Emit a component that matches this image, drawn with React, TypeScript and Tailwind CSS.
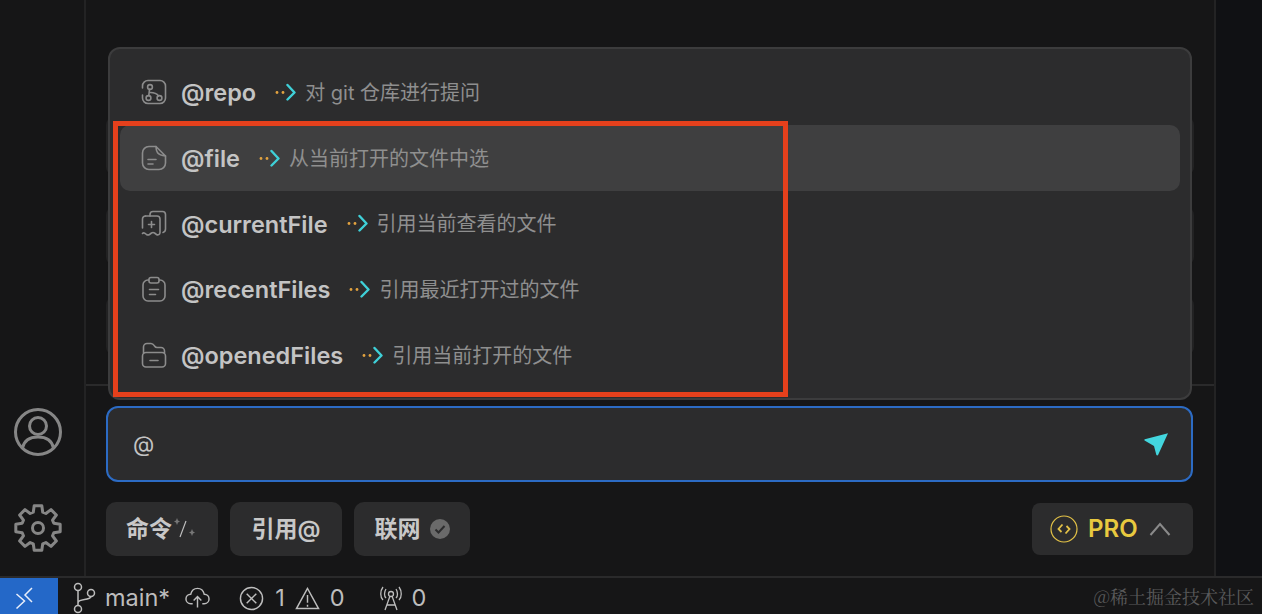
import React from 'react';

const ROWS = [
  { name: '@repo', hint: '对 git 仓库进行提问', icon: 'repo' },
  { name: '@file', hint: '从当前打开的文件中选', icon: 'file', active: true },
  { name: '@currentFile', hint: '引用当前查看的文件', icon: 'current' },
  { name: '@recentFiles', hint: '引用最近打开过的文件', icon: 'recent' },
  { name: '@openedFiles', hint: '引用当前打开的文件', icon: 'opened' },
];

const RowIcon = ({ kind }: { kind: string }) => {
  const common = { width: 26, height: 26, viewBox: '0 0 26 26', fill: 'none', stroke: '#8c8c8c', strokeWidth: 1.6, strokeLinecap: 'round' as const, strokeLinejoin: 'round' as const, className: 'shrink-0' };
  if (kind === 'repo') {
    return (
      <svg {...common}>
        <path d="M1.500 9V7A5.500 5.500 0 0 1 7 1.500h12A5.500 5.500 0 0 1 24.500 7v12a5.500 5.500 0 0 1-5.500 5.500H7A5.500 5.500 0 0 1 1.500 19v-3" />
        <circle cx="9" cy="8" r="2.400" />
        <circle cx="7.500" cy="19" r="2.400" />
        <circle cx="18.500" cy="19" r="2.400" />
        <path d="M8.500 10.400l-.7 6.200M9.500 13.500c3 0 6 .5 8 3.300" />
      </svg>
    );
  }
  if (kind === 'file') {
    return (
      <svg {...common}>
        <path d="M15 1.500H8A6.500 6.500 0 0 0 1.500 8v10A6.500 6.500 0 0 0 8 24.500h10a6.500 6.500 0 0 0 6.500-6.500v-7" />
        <path d="M15 1.500c0 5 1 8.500 9.500 9.500z" />
        <path d="M7 14.500h8M7 19h5" />
      </svg>
    );
  }
  if (kind === 'current') {
    return (
      <svg {...common}>
        <path d="M9 6V4.500a3 3 0 0 1 3-3h9.500a3 3 0 0 1 3 3V19c0 2-1 3-2.500 3.500" />
        <path d="M4.500 6H16a3 3 0 0 1 3 3v13.500c0 2-2 3-3.500 2l-2-1.500c-1-.7-2-.7-3 0l-2 1.500c-1 .7-2 .7-3 0l-1.500-1.200c-1-.7-2-.5-2.500.2" />
        <path d="M4.500 6a3 3 0 0 0-3 3v9" />
        <path d="M10.500 11.500v6M7.500 14.500h6" />
      </svg>
    );
  }
  if (kind === 'recent') {
    return (
      <svg {...common}>
        <rect x="2" y="4" width="22" height="21" rx="5" />
        <path d="M8 5V3.500a2 2 0 0 1 2-2h6a2 2 0 0 1 2 2V5a2 2 0 0 1-2 2h-6a2 2 0 0 1-2-2z" fill="#2c2c2d" />
        <path d="M8.500 13.500h9M8.500 18.500h6" />
      </svg>
    );
  }
  return (
    <svg {...common}>
      <path d="M2.500 11V5A3.500 3.500 0 0 1 6 1.500h4c2 0 2.500 1 3.500 2.500.6.900 1.200 1.500 2.500 1.500h4A3.500 3.500 0 0 1 23.500 9v2" />
      <rect x="1.500" y="10.500" width="23" height="14.500" rx="3.500" />
      <path d="M9 18.500h8" />
    </svg>
  );
};

// orange dots + cyan chevron between name and hint
const Arrow = () => (
  <svg width="21" height="18" viewBox="0 0 21 18" fill="none" className="shrink-0">
    <circle cx="2" cy="9.500" r="1.400" fill="#e2a23f" />
    <circle cx="8" cy="9.500" r="1.400" fill="#e2a23f" />
    <path d="M12.500 2l7 7.500-7 7" stroke="#3fd0d8" strokeWidth="2.400" strokeLinecap="round" strokeLinejoin="round" />
  </svg>
);

// eight chunky teeth, built from angles instead of a hand-typed path
const gearPath = () => {
  let d = '';
  for (let i = 0; i < 8; i++) {
    const a = (i * Math.PI) / 4;
    const pts = [
      [16.5, -0.29],
      [22.5, -0.17],
      [22.5, 0.17],
      [16.5, 0.29],
    ];
    pts.forEach(([r, o], j) => {
      const x = 25 + r * Math.sin(a + o);
      const y = 25 - r * Math.cos(a + o);
      d += `${i === 0 && j === 0 ? 'M' : 'L'}${x.toFixed(2)} ${y.toFixed(2)}`;
    });
  }
  return d + 'Z';
};

const App = () => {
  return (
    <div className="w-[1262px] h-[614px] overflow-hidden flex flex-col bg-[#161617] font-['Inter','Noto_Sans_CJK_SC',sans-serif] relative">
      <div className="flex flex-1 min-h-0">
        {/* activity bar */}
        <div className="w-[86px] shrink-0 border-r-2 border-[#232324] flex flex-col items-center justify-end pb-[23px] gap-[46px] pr-[8px]">
          <svg width="50" height="50" viewBox="0 0 50 50" fill="none" stroke="#868686" strokeWidth="3">
            <circle cx="25" cy="25" r="22.500" />
            <circle cx="25" cy="19" r="8.500" />
            <path d="M9.500 41c1.500-7 7-11 15.500-11s14 4 15.500 11" />
          </svg>
          <svg width="50" height="50" viewBox="0 0 50 50" fill="none" stroke="#868686" strokeWidth="3" strokeLinejoin="round">
            <path d={gearPath()} />
            <circle cx="25" cy="25" r="5.500" />
          </svg>
        </div>

        {/* chat panel */}
        <div className="w-[1130px] shrink-0 border-r-2 border-[#232324] flex flex-col justify-end">
          {/* history cards, mostly hidden behind the popup */}
          <div className="px-[20px] pb-[29px] flex flex-col gap-[32px]">
            <div className="h-[58px] rounded-[8px] bg-[#222223]" />
            <div className="h-[58px] rounded-[8px] bg-[#222223]" />
            <div className="h-[58px] rounded-[8px] bg-[#222223]" />
          </div>
          <div className="border-t-2 border-[#2a2a2b] px-[20px] pt-[20px] h-[192px] shrink-0 flex flex-col">
            <div className="h-[76px] w-[1087px] rounded-[12px] border-2 border-[#2c6bc4] bg-[#2c2c2d] flex items-center justify-between pl-[25px] pr-[23px]">
              <span className="text-[22px] text-[#c4c4c4] font-normal">@</span>
              <svg width="24" height="23" viewBox="0 0 24 23" fill="#43d6de">
                <path d="M.8 6.200L24 .2 14.200 21.800c-.5 1-1.500 1-1.900 0L10 13 1 7.800c-.8-.5-.8-1.300-.2-1.600z" />
              </svg>
            </div>
            <div className="flex items-center gap-[12px] mt-[20px]">
              <div className="h-[54px] w-[112px] rounded-[10px] bg-[#2c2c2d] flex items-center justify-center text-[23px] font-semibold text-[#c8c8c8]">
                命令
                <svg width="26" height="26" viewBox="0 0 26 26">
                  <path d="M5 2l1 2.500L8 5.500 6 6.500 5 9 4 6.500 2 5.500 4 4.500z" fill="#777" />
                  <path d="M14 5L8 21" stroke="#c0c0c0" strokeWidth="1.200" />
                  <path d="M20 13l1 2.500 2 1-2 1-1 2.500-1-2.500-2-1 2-1z" fill="#777" />
                </svg>
              </div>
              <div className="h-[54px] w-[112px] rounded-[10px] bg-[#2c2c2d] flex items-center justify-center text-[23px] font-semibold text-[#c8c8c8]">引用@</div>
              <div className="h-[54px] w-[116px] rounded-[10px] bg-[#2c2c2d] flex items-center justify-center gap-[9px] text-[23px] font-semibold text-[#c8c8c8]">
                联网
                <svg width="20" height="20" viewBox="0 0 20 20">
                  <circle cx="10" cy="10" r="10" fill="#6a6a6a" />
                  <path d="M5.500 10.500l3 3 6-6.500" fill="none" stroke="#2c2c2d" strokeWidth="2" />
                </svg>
              </div>
              <div className="ml-auto mr-[1px] h-[52px] w-[161px] rounded-[8px] bg-[#2c2c2d] flex items-center pl-[18px]">
                <svg width="28" height="28" viewBox="0 0 28 28" fill="none" stroke="#e3c247">
                  <circle cx="14" cy="14" r="13" strokeWidth="1.200" />
                  <path d="M12.500 9.500l-4 4.500 3 3M15.500 18.500l4-4.500-3-3" strokeWidth="1.800" />
                </svg>
                <span className="ml-[10px] text-[24px] font-semibold text-[#e8c93f] leading-none">PRO</span>
                <svg width="22" height="14" viewBox="0 0 22 14" fill="none" stroke="#8a8a8a" strokeWidth="2" className="ml-[11px]">
                  <path d="M1.500 13L11 2l9.500 11" />
                </svg>
              </div>
            </div>
          </div>
        </div>
        <div className="flex-1 bg-[#101114]" />
      </div>

      {/* status bar */}
      <div className="h-[38px] shrink-0 border-t-2 border-[#2a2a2b] flex items-stretch text-[23.5px] text-[#bdbdbd]">
        <div className="w-[58px] bg-[#2468c8] flex items-center justify-center">
          <svg width="28" height="28" viewBox="0 0 28 28" fill="none" stroke="#e8eefa" strokeWidth="1.500">
            <path d="M1.500 12l8 7-8 7.500M17 6l-7 7 7 7" />
          </svg>
        </div>
        <div className="flex-1 flex items-center pt-[4px]">
          <svg width="24" height="32" viewBox="0 0 24 32" fill="none" stroke="#bdbdbd" strokeWidth="1.500" className="ml-[15px]">
            <circle cx="5" cy="5" r="3.500" />
            <circle cx="5" cy="27" r="3.500" />
            <circle cx="18" cy="11" r="3.500" />
            <path d="M5 8.500v15M5 21c0-5 12-2 13-6.500" />
          </svg>
          <span className="ml-[8px] leading-none">main*</span>
          <svg width="25" height="22" viewBox="0 0 26 22" fill="none" stroke="#bdbdbd" strokeWidth="1.500" className="ml-[15px]">
            <path d="M8 17H6a5 5 0 0 1 0-10c1-4 4-6 7-6s6 2 7 6a5 5 0 0 1 0 10h-2" />
            <path d="M13 21V10M9 13.500l4-4 4 4" />
          </svg>
          <svg width="25" height="25" viewBox="0 0 26 26" fill="none" stroke="#bdbdbd" strokeWidth="1.500" className="ml-[29px]">
            <circle cx="13" cy="13" r="11.500" />
            <path d="M8 8l10 10M18 8L8 18" />
          </svg>
          <span className="ml-[11px] leading-none">1</span>
          <svg width="25" height="24" viewBox="0 0 26 24" fill="none" stroke="#bdbdbd" strokeWidth="1.500" className="ml-[10px]">
            <path d="M13 2L1.500 23h23z" />
            <path d="M13 9v8M13 19v2" />
          </svg>
          <span className="ml-[10px] leading-none">0</span>
          <svg width="24" height="26" viewBox="0 0 24 26" fill="none" stroke="#bdbdbd" strokeWidth="1.300" className="ml-[34px]">
            <circle cx="12" cy="9" r="2.500" />
            <path d="M4 2c-3 4-3 10 0 13M20 2c3 4 3 10 0 13M7 4c-2 3-2 7 0 9M17 4c2 3 2 7 0 9M11 11L6 25M13 11l5 14M8 20h8" />
          </svg>
          <span className="ml-[9px] leading-none">0</span>
        </div>
      </div>

      {/* @ mention popup, floats over the chat */}
      <div className="absolute left-[108px] top-[47px] w-[1084px] h-[353px] rounded-[12px] border-2 border-[#3c3c3d] bg-[#2c2c2d] px-[10px] pt-[10px]">
        {ROWS.map((row) => (
          <div key={row.name} className={`h-[65.75px] rounded-[10px] flex items-center pl-[21px] ${row.active ? 'bg-[#3f3f40]' : ''}`}>
            <RowIcon kind={row.icon} />
            <span className="ml-[14px] mt-[2px] text-[23.5px] font-semibold text-[#c4c4c4] leading-none">{row.name}</span>
            <span className="ml-[19px]"><Arrow /></span>
            <span className="ml-[9px] mt-[2px] text-[20px] text-[#8f8f8f] leading-none">{row.hint}</span>
          </div>
        ))}
      </div>

      {/* red annotation box */}
      <div className="absolute left-[113px] top-[121px] w-[675px] h-[276px] border-[5px] border-[#e5401c]" />

      <div className="absolute right-[8px] bottom-[9px] text-[18px] leading-none text-[#5a5a5b] font-['Noto_Serif_CJK_SC','Noto_Sans_CJK_SC',serif]">@稀土掘金技术社区</div>
    </div>
  );
};

export default App;
